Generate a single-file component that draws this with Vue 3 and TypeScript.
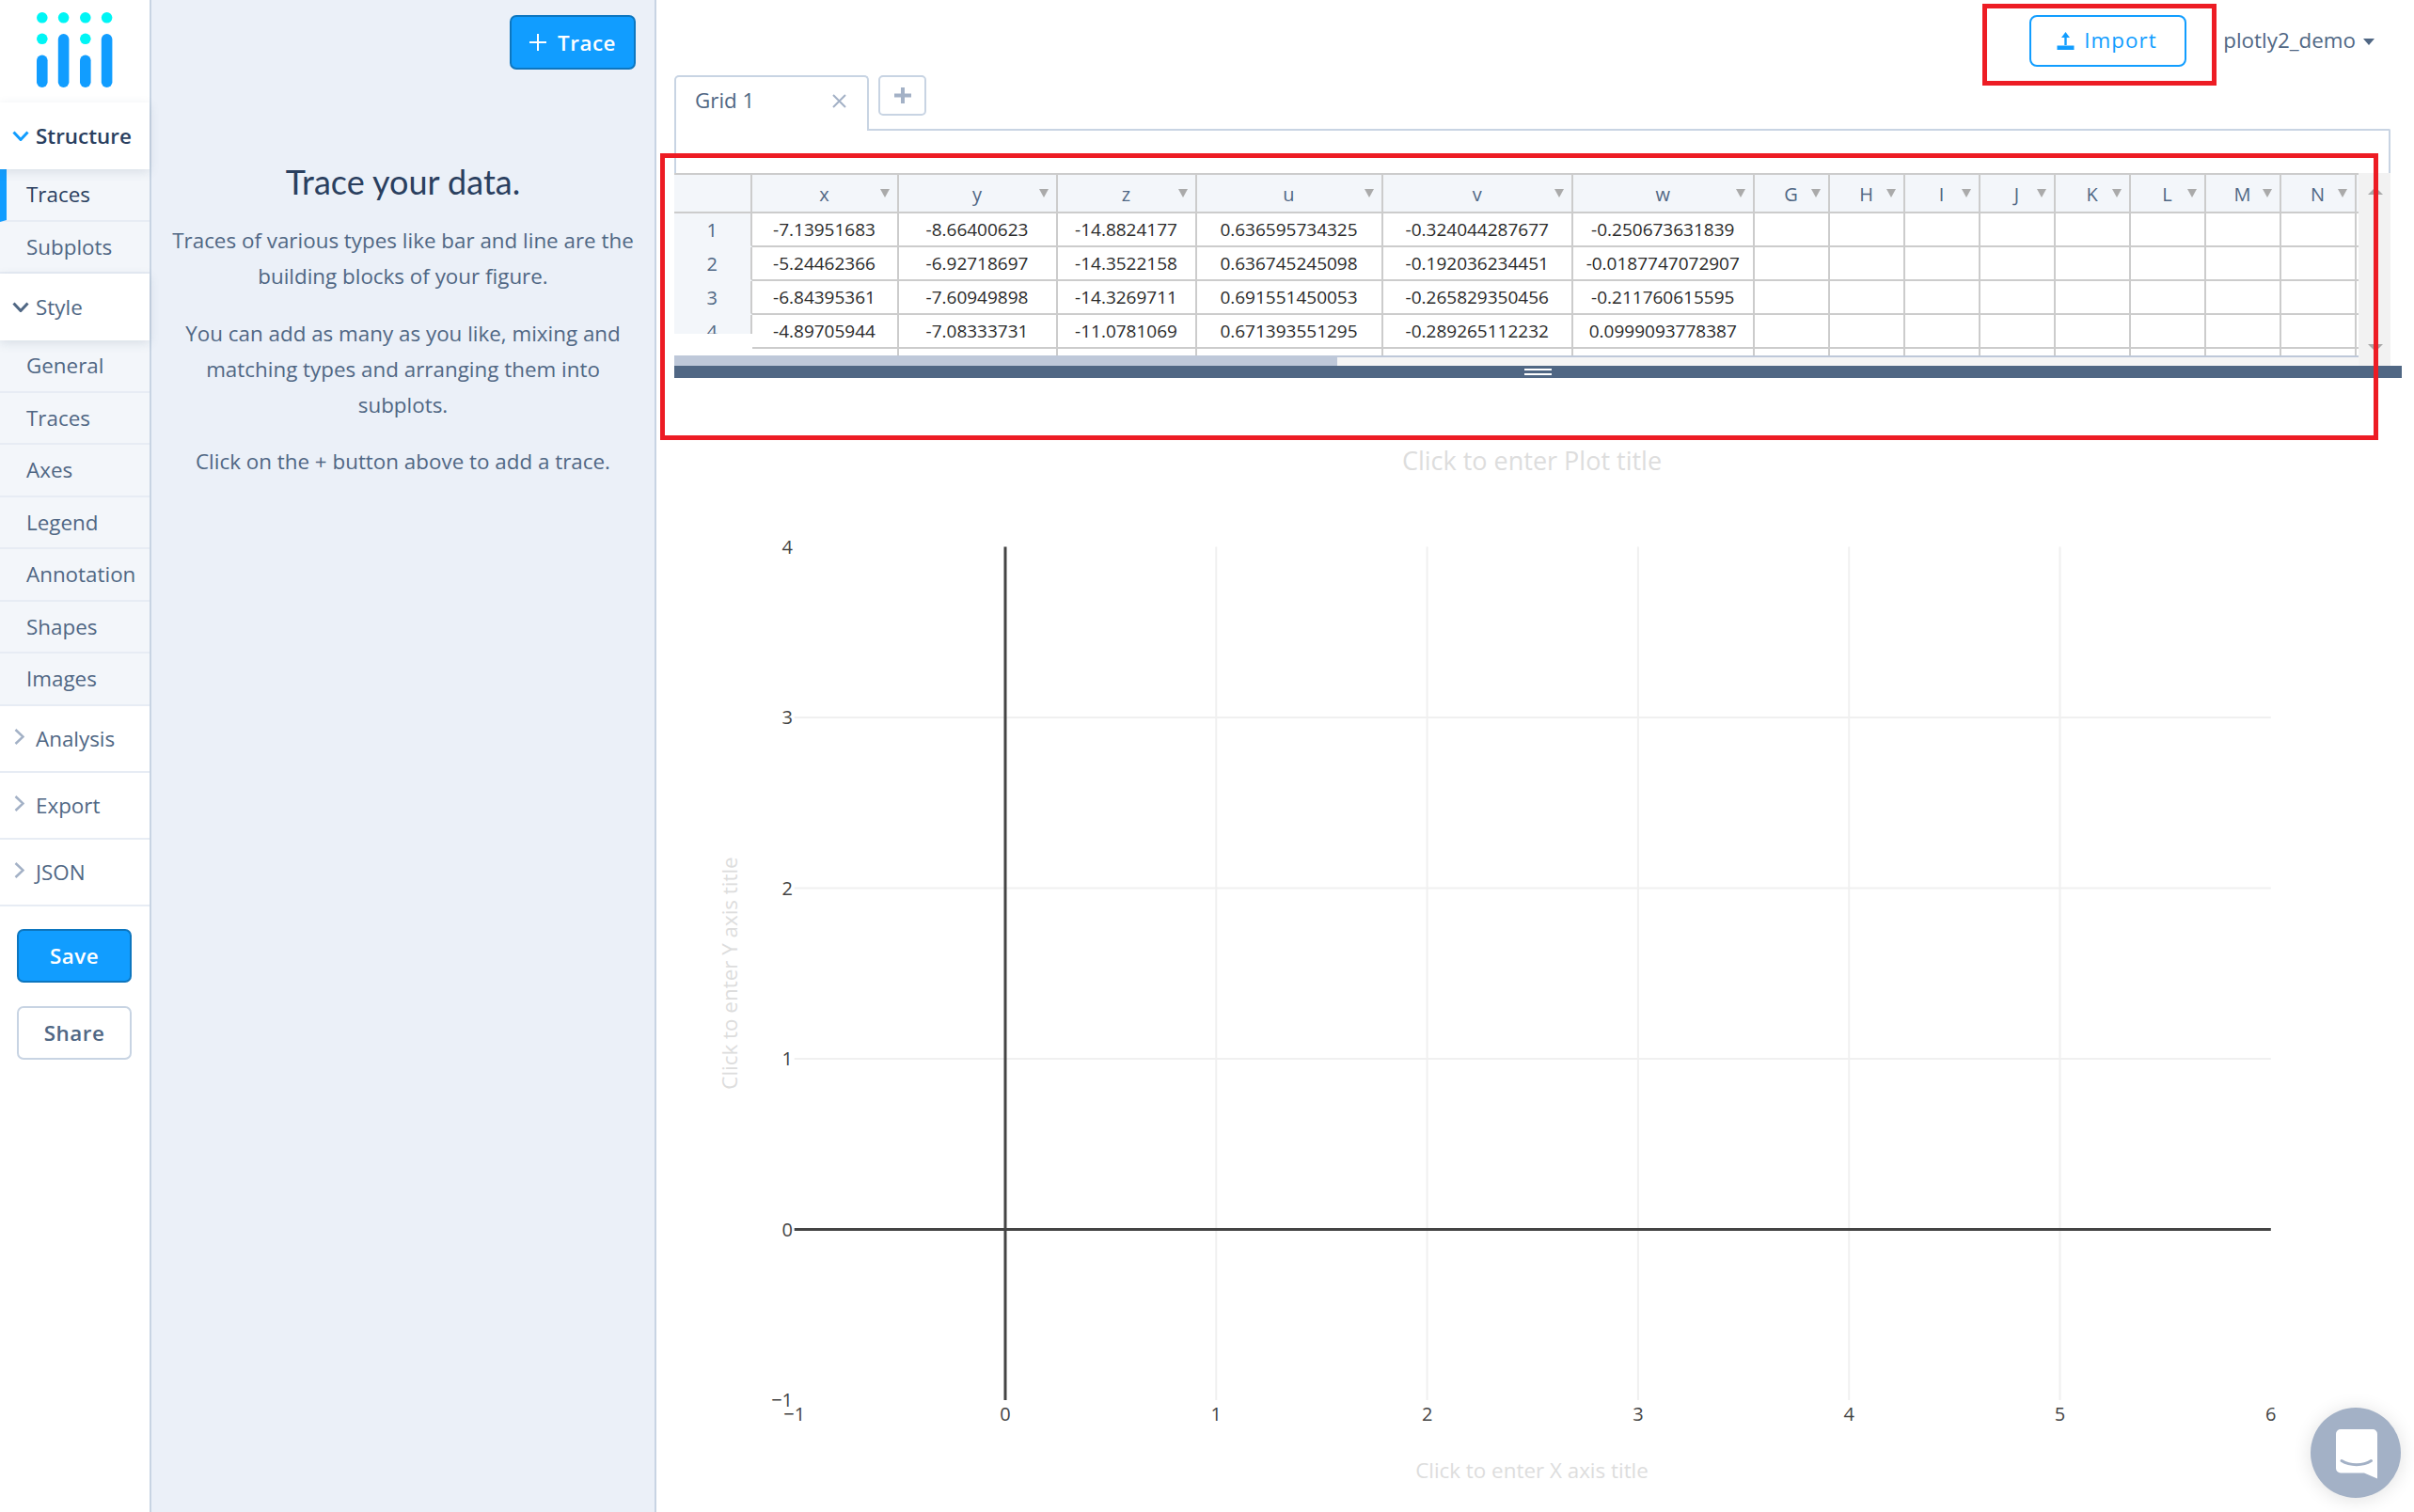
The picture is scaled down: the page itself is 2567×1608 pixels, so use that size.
<script setup lang="ts">
const structureItems = [
  { label: 'Traces', active: true },
  { label: 'Subplots', active: false },
]
const styleItems = ['General', 'Traces', 'Axes', 'Legend', 'Annotation', 'Shapes', 'Images']
const collapsedGroups = ['Analysis', 'Export', 'JSON']

const columns = [
  { name: 'x', width: 156 },
  { name: 'y', width: 169 },
  { name: 'z', width: 148 },
  { name: 'u', width: 198 },
  { name: 'v', width: 202.5 },
  { name: 'w', width: 192.5 },
  ...['G', 'H', 'I', 'J', 'K', 'L', 'M', 'N', 'O'].map(name => ({ name, width: 80 })),
]

const rows = [
  ['-7.13951683', '-8.66400623', '-14.8824177', '0.636595734325', '-0.324044287677', '-0.250673631839'],
  ['-5.24462366', '-6.92718697', '-14.3522158', '0.636745245098', '-0.192036234451', '-0.0187747072907'],
  ['-6.84395361', '-7.60949898', '-14.3269711', '0.691551450053', '-0.265829350456', '-0.211760615595'],
  ['-4.89705944', '-7.08333731', '-11.0781069', '0.671393551295', '-0.289265112232', '0.0999093778387'],
  [],
]

// plot coordinates, in page pixels
const x0 = 1069
const xStep = 224.3
const y0 = 1307.5
const yStep = 181.5
const left = x0 - xStep
const right = x0 + 6 * xStep
const top = y0 - 4 * yStep
const bottom = y0 + yStep
const xTicks = [-1, 0, 1, 2, 3, 4, 5, 6]
const yTicks = [-1, 0, 1, 2, 3, 4]

function tickLabel(value: number) {
  return value < 0 ? `\u2212${Math.abs(value)}` : String(value)
}
</script>

<template>
  <div class="app">
    <aside class="sidebar">
      <div class="logo">
        <svg width="84" height="84" viewBox="38 11 84 84">
          <g fill="#00f5f5">
            <rect x="39" y="13" width="11.6" height="11.6" rx="5.8" />
            <rect x="61.8" y="13" width="11.6" height="11.6" rx="5.8" />
            <rect x="85" y="13" width="11.6" height="11.6" rx="5.8" />
            <rect x="107.8" y="13" width="11.6" height="11.6" rx="5.8" />
            <rect x="39" y="35.500" width="11.6" height="11.6" rx="5.8" />
            <rect x="85" y="35.500" width="11.6" height="11.6" rx="5.8" />
          </g>
          <g fill="#119dff">
            <rect x="39" y="58.5" width="11.6" height="34.5" rx="5.8" />
            <rect x="61.8" y="36" width="11.6" height="57" rx="5.8" />
            <rect x="85" y="58.5" width="11.6" height="34.5" rx="5.8" />
            <rect x="107.8" y="36" width="11.6" height="57" rx="5.8" />
          </g>
        </svg>
      </div>

      <div class="group-header group-open group-current">
        <svg class="chevron-down" width="18" height="11" viewBox="0 0 18 11"><path d="M1.5 1.5 9 9.5l7.5-8" /></svg>
        <span>Structure</span>
      </div>
      <div
        v-for="item in structureItems"
        :key="item.label"
        class="nav-item"
        :class="{ 'nav-item-active': item.active }"
      >
        {{ item.label }}
      </div>

      <div class="group-header group-open">
        <svg class="chevron-down" width="18" height="11" viewBox="0 0 18 11"><path d="M1.5 1.5 9 9.5l7.5-8" /></svg>
        <span>Style</span>
      </div>
      <div v-for="item in styleItems" :key="item" class="nav-item">
        {{ item }}
      </div>

      <div v-for="group in collapsedGroups" :key="group" class="group-header group-closed">
        <svg class="chevron-right" width="11" height="17" viewBox="0 0 11 17"><path d="M1.5 1 9.5 8.5l-8 7.5" /></svg>
        <span>{{ group }}</span>
      </div>

      <div class="sidebar-actions">
        <button class="btn btn-primary side-btn" type="button">Save</button>
        <button class="btn btn-outline side-btn" type="button">Share</button>
      </div>
    </aside>

    <section class="panel">
      <div class="panel-top">
        <button class="btn btn-primary trace-btn" type="button">
          <svg width="18" height="18" viewBox="0 0 18 18"><path d="M9 0v18M0 9h18" stroke="#fff" stroke-width="2" /></svg>
          Trace
        </button>
      </div>
      <div class="panel-copy">
        <h1>Trace your data.</h1>
        <p>Traces of various types like bar and line are the building blocks of your figure.</p>
        <p>You can add as many as you like, mixing and matching types and arranging them into subplots.</p>
        <p>Click on the + button above to add a trace.</p>
      </div>
    </section>

    <main class="main">
      <header class="topbar">
        <button class="import-btn" type="button">
          <svg width="19" height="19" viewBox="0 0 19 19">
            <path d="M9.5 0 5 6h3.300v8h2.400V6H14z" fill="#119dff" />
            <rect x="0.5" y="14.500" width="18" height="4.500" fill="#119dff" />
          </svg>
          <span>Import</span>
        </button>
        <div class="user">
          <span>plotly2_demo</span>
          <i class="user-caret" />
        </div>
      </header>

      <div class="tabs">
        <div class="tab">
          <span>Grid 1</span>
          <svg width="15" height="15" viewBox="0 0 15 15"><path d="M1 1l13 13M14 1 1 14" stroke="#a3b1c6" stroke-width="2" /></svg>
        </div>
        <div class="tab-add">
          <svg width="18" height="17" viewBox="0 0 18 17"><path d="M9 0v17M0 8.500h18" stroke="#a3b1c6" stroke-width="4" /></svg>
        </div>
      </div>
      <div class="tab-panel" />

      <div class="grid-area">
        <div class="grid-left">
          <div class="table-viewport">
            <table class="sheet">
              <colgroup>
                <col style="width: 82.5px">
                <col v-for="col in columns" :key="col.name" :style="{ width: col.width + 'px' }">
              </colgroup>
              <thead>
                <tr>
                  <th class="index-cell" />
                  <th v-for="col in columns" :key="col.name">
                    {{ col.name }}
                    <i class="filter-arrow" />
                  </th>
                </tr>
              </thead>
              <tbody>
                <tr v-for="(row, r) in rows" :key="r">
                  <td class="index-cell">{{ r + 1 }}</td>
                  <td v-for="(col, c) in columns" :key="col.name">{{ row[c] }}</td>
                </tr>
              </tbody>
            </table>
            <div class="index-mask" />
          </div>
          <div class="hscroll"><div class="hscroll-thumb" /></div>
        </div>
        <div class="vscroll">
          <i class="vscroll-up" />
          <i class="vscroll-down" />
        </div>
      </div>
      <div class="resize-bar">
        <span class="resize-handle" />
      </div>

      <svg class="plot" width="1869" height="1206" viewBox="698 402 1869 1206">
        <g stroke="#f0f0f0" stroke-width="2">
          <line
            v-for="tick in xTicks.slice(2, -1)"
            :key="'gx' + tick"
            :x1="x0 + tick * xStep"
            :x2="x0 + tick * xStep"
            :y1="top"
            :y2="bottom"
          />
          <line
            v-for="tick in yTicks.slice(2, -1)"
            :key="'gy' + tick"
            :x1="left"
            :x2="right"
            :y1="y0 - tick * yStep"
            :y2="y0 - tick * yStep"
          />
        </g>
        <line :x1="x0" :x2="x0" :y1="top" :y2="bottom" stroke="#444" stroke-width="3" />
        <line :x1="left" :x2="right" :y1="y0" :y2="y0" stroke="#444" stroke-width="3" />

        <g class="tick-text" text-anchor="end">
          <text v-for="tick in yTicks" :key="'ty' + tick" x="843" :y="y0 - tick * yStep + 7">{{ tickLabel(tick) }}</text>
        </g>
        <g class="tick-text" text-anchor="middle">
          <text v-for="tick in xTicks" :key="'tx' + tick" :x="x0 + tick * xStep" y="1511">{{ tickLabel(tick) }}</text>
        </g>

        <text class="plot-title" x="1629" y="500" text-anchor="middle">Click to enter Plot title</text>
        <text class="axis-title" x="1629" y="1572" text-anchor="middle">Click to enter X axis title</text>
        <text class="axis-title" text-anchor="middle" transform="translate(784 1035) rotate(-90)">Click to enter Y axis title</text>
      </svg>
    </main>

    <!-- highlight boxes drawn over the screenshot -->
    <div class="callout callout-import" />
    <div class="callout callout-grid" />

    <div class="chat-bubble">
      <svg width="46" height="54" viewBox="0 0 46 54">
        <path d="M6 0h34a5 5 0 0 1 5 5v47.500L31 46.500H6a5 5 0 0 1-5-5V5a5 5 0 0 1 5-5z" fill="#fff" />
        <path d="M7 33.500c9 5.500 23 5.500 31.500 0" fill="none" stroke="#a3b1c6" stroke-width="3" stroke-linecap="round" />
      </svg>
    </div>
  </div>
</template>

<style>
html,
body {
  margin: 0;
  background: #fff;
}
</style>

<style scoped>
.app {
  position: relative;
  display: flex;
  width: 2567px;
  height: 1608px;
  overflow: hidden;
  font-family: "Open Sans", "Liberation Sans", sans-serif;
  font-size: 22.400px;
  color: #506784;
  background: #fff;
}

.sidebar {
  flex: none;
  box-sizing: border-box;
  width: 161px;
  border-right: 2px solid #c8d4e3;
  background: #fff;
}

.logo {
  height: 109px;
  padding: 11px 0 0 38px;
  box-sizing: border-box;
}

.logo svg {
  display: block;
}

.group-header {
  position: relative;
  display: flex;
  align-items: center;
  box-sizing: border-box;
  padding-left: 38px;
  background: #fff;
}

.group-open {
  z-index: 1;
  height: 71px;
  box-shadow: 0 3px 10px rgba(80, 103, 132, 0.16);
}

.group-current {
  color: #2a3f5f;
  font-weight: 600;
}

.group-closed {
  height: 71px;
  border-bottom: 2px solid #e7ecf4;
}

.chevron-down {
  position: absolute;
  left: 13px;
  top: 30px;
  fill: none;
  stroke: #506784;
  stroke-width: 3;
}

.group-current .chevron-down {
  stroke: #119dff;
}

.chevron-right {
  position: absolute;
  left: 15px;
  top: 24.500px;
  fill: none;
  stroke: #a3b1c6;
  stroke-width: 2.500;
}

.nav-item {
  display: flex;
  align-items: center;
  box-sizing: border-box;
  height: 55.500px;
  padding-left: 28px;
  background: #f3f6fa;
  border-bottom: 2.500px solid #e7ecf4;
}

.nav-item-active {
  color: #2a3f5f;
  font-weight: 500;
  border-left: 7px solid #119dff;
  padding-left: 21px;
}

.sidebar-actions {
  display: flex;
  flex-direction: column;
  gap: 25px;
  padding: 24px 19px 0 18px;
}

.btn {
  box-sizing: border-box;
  padding: 0;
  border-radius: 7px;
  font-family: inherit;
  font-size: 22.400px;
  font-weight: 600;
  letter-spacing: 0.5px;
}

.btn-primary {
  border: 2px solid #0d76bf;
  background: #119dff;
  color: #fff;
}

.btn-outline {
  border: 2px solid #c8d4e3;
  background: #fff;
  color: #506784;
}

.side-btn {
  width: 122px;
  height: 57px;
}

.panel {
  flex: none;
  box-sizing: border-box;
  width: 537px;
  border-right: 2px solid #c8d4e3;
  background: #ebf0f8;
}

.panel-top {
  display: flex;
  justify-content: flex-end;
  padding: 16px 20px 0 0;
}

.trace-btn {
  display: flex;
  align-items: center;
  justify-content: center;
  gap: 12px;
  width: 134px;
  height: 58px;
}

.panel-copy {
  width: 500px;
  margin: 0 auto;
  text-align: center;
  line-height: 38px;
}

.panel-copy h1 {
  margin: 94px 0 19px;
  font-family: Lato, "Open Sans", sans-serif;
  font-size: 36px;
  font-weight: 400;
  line-height: 50px;
  color: #2a3f5f;
}

.panel-copy p {
  margin: 0 0 22.500px;
}

.main {
  flex: 1;
  min-width: 0;
  padding-left: 19px;
}

.topbar {
  display: flex;
  align-items: flex-start;
  justify-content: flex-end;
  box-sizing: border-box;
  height: 80px;
  padding: 14.500px 0 0;
  position: relative;
}

.import-btn {
  position: absolute;
  left: 1441px;
  top: 16px;
  display: flex;
  align-items: center;
  justify-content: center;
  gap: 10px;
  box-sizing: border-box;
  width: 167px;
  height: 55px;
  padding: 0 2px 3px 0;
  border: 2px solid #119dff;
  border-radius: 8px;
  background: #fff;
  font-family: inherit;
  font-size: 22.400px;
  letter-spacing: 1px;
  color: #119dff;
}

.import-btn svg {
  margin-top: 3px;
}

.user {
  display: flex;
  align-items: center;
  gap: 8px;
  height: 56px;
  padding-right: 42px;
}

.user-caret {
  width: 0;
  height: 0;
  margin-top: 3px;
  border-style: solid;
  border-width: 7px 6.500px 0;
  border-color: #506784 transparent transparent;
}

.tabs {
  display: flex;
  gap: 10px;
  height: 57px;
  position: relative;
  z-index: 1;
}

.tab {
  display: flex;
  align-items: flex-start;
  justify-content: space-between;
  box-sizing: border-box;
  width: 207px;
  height: 59px;
  padding: 9px 22px 0 20px;
  border: 2px solid #c8d4e3;
  border-bottom: 0;
  border-radius: 5px 5px 0 0;
  background: #fff;
}

.tab svg {
  margin-top: 9px;
}

.tab-add {
  display: flex;
  align-items: center;
  justify-content: center;
  box-sizing: border-box;
  width: 51px;
  height: 43px;
  border: 2px solid #c8d4e3;
  border-radius: 5px;
}

.tab-panel {
  box-sizing: border-box;
  width: 1825px;
  height: 47px;
  border: 2px solid #c8d4e3;
  border-bottom: 0;
  border-radius: 2px 2px 0 0;
}

.grid-area {
  display: flex;
  width: 1825px;
  height: 205px;
}

.grid-left {
  flex: none;
  width: 1791px;
}

.table-viewport {
  position: relative;
  height: 194px;
  overflow: hidden;
}

.sheet {
  table-layout: fixed;
  width: 1868.500px;
  border-collapse: separate;
  border-spacing: 0;
  font-size: 19px;
}

.sheet th,
.sheet td {
  box-sizing: border-box;
  padding: 0;
  border-right: 2px solid #ccc;
  border-bottom: 2px solid #ccc;
  text-align: center;
  white-space: nowrap;
  overflow: hidden;
}

.sheet th {
  position: relative;
  height: 43px;
  padding-top: 2px;
  border-top: 2px solid #ccc;
  background: #f3f6fa;
  font-weight: 400;
  font-size: 20px;
  color: #506784;
}

.sheet td {
  height: 36px;
  color: #2a2a2a;
}

.sheet .index-cell {
  background: #f3f6fa;
  color: #506784;
  font-size: 20px;
}

.sheet td.index-cell {
  border-bottom-color: #f3f6fa;
}

.filter-arrow {
  position: absolute;
  right: 8px;
  top: 15px;
  width: 0;
  height: 0;
  border-style: solid;
  border-width: 9px 5px 0;
  border-color: #aaa transparent transparent;
}

.index-mask {
  position: absolute;
  left: 0;
  top: 171px;
  width: 82.500px;
  height: 23px;
  background: #fff;
}

.hscroll {
  box-sizing: border-box;
  height: 11px;
  border-top: 2px solid #bec8d9;
  background: #f5f5f5;
  position: relative;
}

.hscroll-thumb {
  position: absolute;
  left: 0;
  top: -2px;
  width: 705px;
  height: 13px;
  background: #bec8d9;
}

.vscroll {
  position: relative;
  flex: none;
  width: 34px;
  background: #f2f2f2;
}

.vscroll-up,
.vscroll-down {
  position: absolute;
  left: 10px;
  width: 0;
  height: 0;
  border-style: solid;
}

.vscroll-up {
  top: 15px;
  border-width: 0 8px 8px;
  border-color: transparent transparent #a8a8a8;
}

.vscroll-down {
  top: 182px;
  border-width: 8px 8px 0;
  border-color: #a8a8a8 transparent transparent;
}

.resize-bar {
  position: relative;
  width: 1837px;
  height: 13px;
  background: #506784;
}

.resize-handle {
  position: absolute;
  left: 904px;
  top: 3px;
  box-sizing: border-box;
  width: 29px;
  height: 7px;
  border-top: 2px solid #fff;
  border-bottom: 2px solid #fff;
}

.plot {
  display: block;
  margin-left: -19px;
}

.tick-text {
  font-size: 20px;
  fill: #444;
}

.plot-title {
  font-size: 27px;
  fill: #ddd;
}

.axis-title {
  font-size: 22.400px;
  fill: #ddd;
}

.callout {
  position: absolute;
  box-sizing: border-box;
  border: 5px solid #ed1c24;
}

.callout-import {
  left: 2108px;
  top: 4px;
  width: 249px;
  height: 87px;
}

.callout-grid {
  left: 702px;
  top: 163px;
  width: 1827px;
  height: 305px;
}

.chat-bubble {
  position: absolute;
  left: 2457px;
  top: 1497px;
  display: flex;
  align-items: center;
  justify-content: center;
  width: 96px;
  height: 96px;
  padding: 3px 0 0 1px;
  box-sizing: border-box;
  border-radius: 50%;
  background: #a3b1c6;
  box-shadow: 0 2px 20px rgba(0, 0, 0, 0.12);
}
</style>
